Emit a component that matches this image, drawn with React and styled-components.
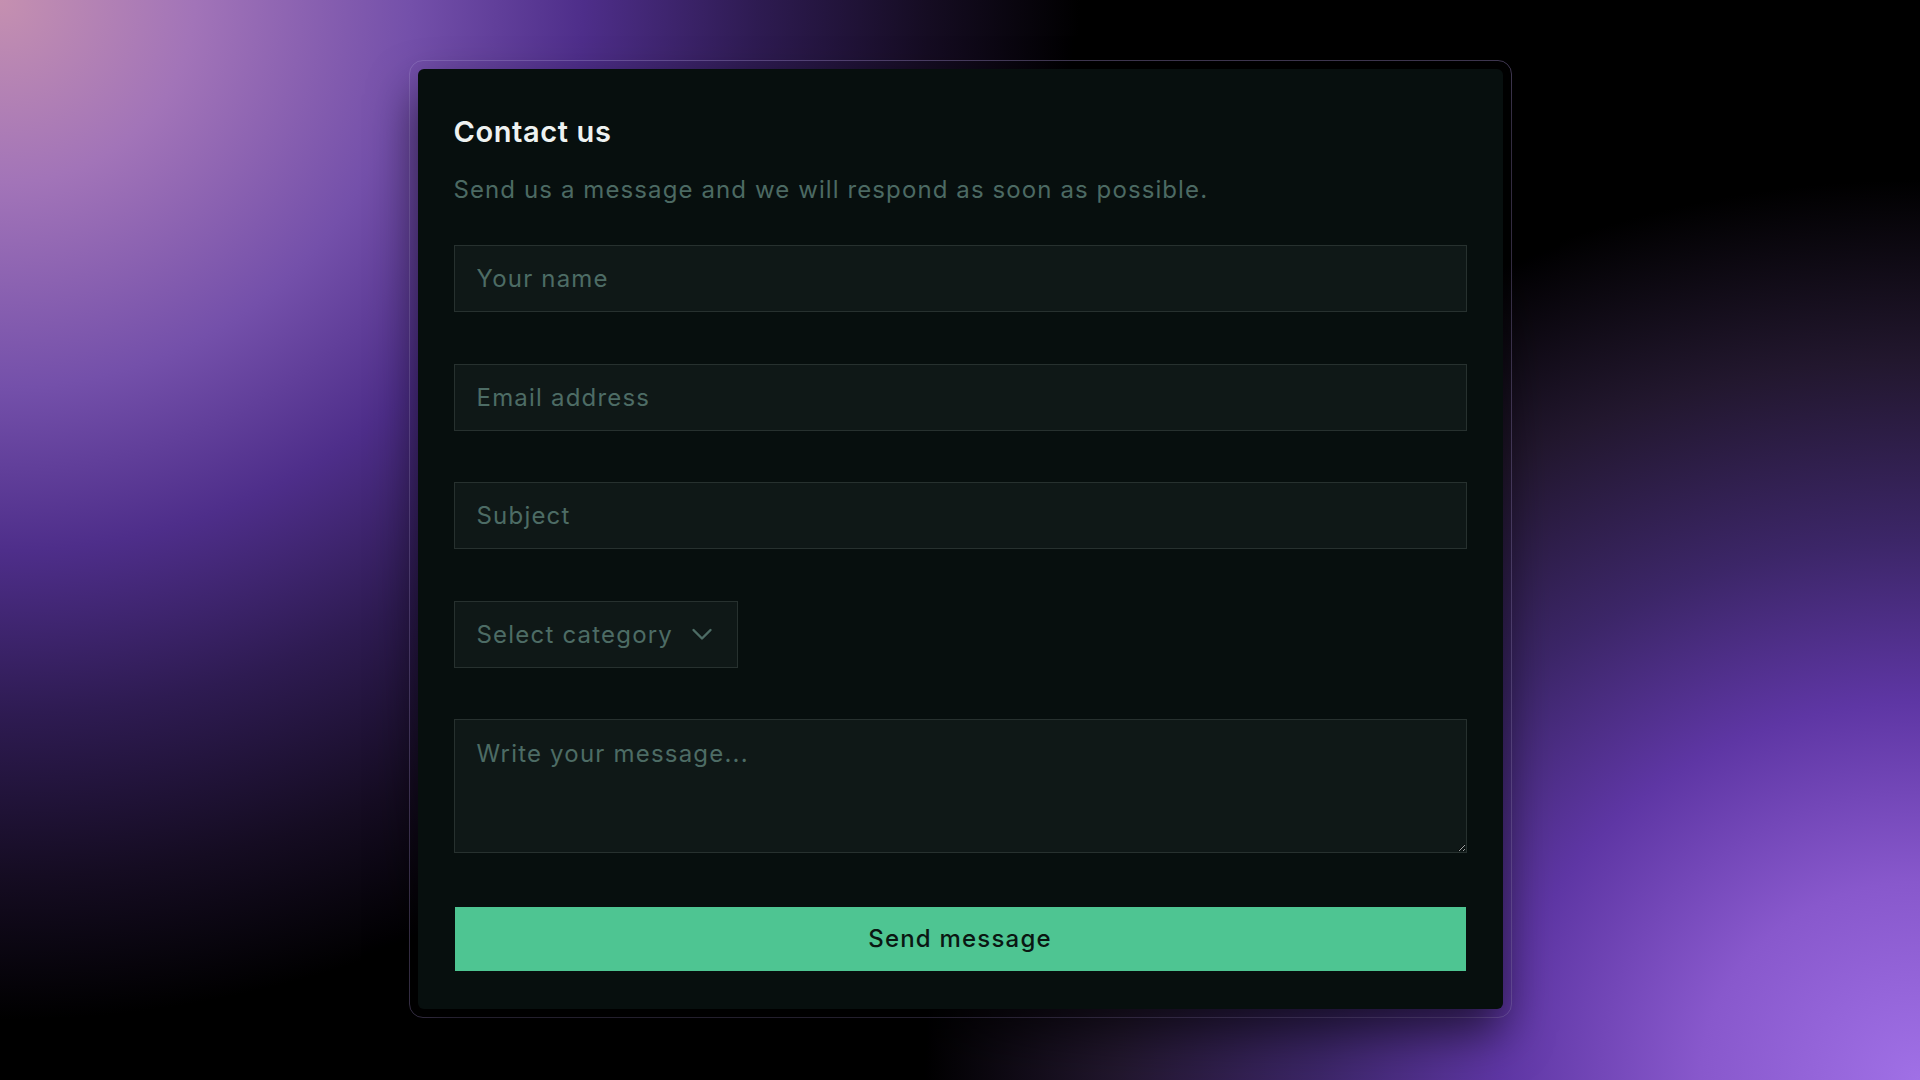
import React from "react";
import styled, { createGlobalStyle } from "styled-components";

const GlobalStyle = createGlobalStyle`
  html, body {
    margin: 0;
    padding: 0;
    height: 100%;
  }
  body {
    background: #000;
    font-family: Inter, "Noto Sans", sans-serif;
    color-scheme: dark;
  }
`;

const Page = styled.div`
  width: 1920px;
  height: 1080px;
  overflow: hidden;
  display: flex;
  justify-content: center;
  align-items: flex-start;
  padding-top: 60px;
  box-sizing: border-box;
  background:
    radial-gradient(ellipse 1000px 900px at 100% 100%, #a070e6 0%, #8858cc 22%, #5e36a4 42%, #3c2668 60%, #22172e 80%, transparent 100%),
    radial-gradient(ellipse 1080px 1020px at 0% 0%, #c590b0 0%, #a274b8 18%, #7450aa 38%, #4e2e8a 54%, #2e1b52 70%, #150c22 86%, transparent 100%),
    #000;
`;

const Frame = styled.div`
  padding: 8px;
  border: 1px solid rgba(160, 140, 205, 0.4);
  border-radius: 14px;
`;

const Card = styled.div`
  width: 1085px;
  box-sizing: border-box;
  padding: 46px 36px 38px;
  background: #070f0e;
  border-radius: 6px;
  box-shadow: 0 24px 48px rgba(0, 0, 0, 0.6);
`;

const Title = styled.h1`
  margin: 0;
  font-size: 29px;
  line-height: 34px;
  font-weight: 600;
  color: #eef2f1;
  letter-spacing: 0.6px;
`;

const Subtitle = styled.p`
  margin: 26px 0 40px;
  font-size: 24px;
  line-height: 30px;
  color: #4c6a63;
  letter-spacing: 1.1px;
`;

const Form = styled.form`
  display: flex;
  flex-direction: column;
  gap: 51.6px;
`;

const fieldBase = `
  box-sizing: border-box;
  width: 100%;
  margin: 0;
  background: #0f1817;
  border: 1px solid #27312f;
  border-radius: 0;
  color: #c9d4d1;
  font-family: Inter, "Noto Sans", sans-serif;
  font-size: 24px;
  letter-spacing: 1.2px;
  outline: none;
  &::placeholder {
    color: #4d6c65;
    opacity: 1;
  }
`;

const Input = styled.input`
  ${fieldBase}
  height: 67px;
  padding: 0 22px;
`;

const SelectWrap = styled.div`
  position: relative;
  width: 284px;
`;

const Select = styled.select`
  ${fieldBase}
  height: 67px;
  padding: 0 22px;
  appearance: none;
  color: #4d6c65;
  cursor: pointer;
`;

const Chevron = styled.svg`
  position: absolute;
  right: 24px;
  top: 50%;
  transform: translateY(-50%);
  pointer-events: none;
`;

const TextArea = styled.textarea`
  ${fieldBase}
  height: 134px;
  padding: 19px 22px;
  line-height: 30px;
  resize: vertical;
  display: block;
`;

const SendButton = styled.button`
  height: 64px;
  margin: 2px 1px 0;
  border: none;
  background: #4ec592;
  color: #0a1712;
  font-family: Inter, "Noto Sans", sans-serif;
  font-size: 24px;
  font-weight: 500;
  letter-spacing: 1.2px;
  cursor: pointer;
`;

export default function App() {
  return (
    <>
      <GlobalStyle />
      <Page>
        <Frame>
          <Card>
            <Title>Contact us</Title>
            <Subtitle>Send us a message and we will respond as soon as possible.</Subtitle>
            <Form onSubmit={(e) => e.preventDefault()}>
              <Input type="text" placeholder="Your name" />
              <Input type="email" placeholder="Email address" />
              <Input type="text" placeholder="Subject" />
              <SelectWrap>
                <Select defaultValue="">
                  <option value="" disabled>Select category</option>
                  <option value="general">General</option>
                  <option value="support">Support</option>
                  <option value="billing">Billing</option>
                </Select>
                <Chevron width="24" height="24" viewBox="0 0 24 24" fill="none" stroke="#4d6c65" strokeWidth="2.4" strokeLinecap="round" strokeLinejoin="round">
                  <path d="M3.5 8l8.5 8.5 8.5-8.5" />
                </Chevron>
              </SelectWrap>
              <TextArea placeholder="Write your message..." />
              <SendButton type="submit">Send message</SendButton>
            </Form>
          </Card>
        </Frame>
      </Page>
    </>
  );
}
